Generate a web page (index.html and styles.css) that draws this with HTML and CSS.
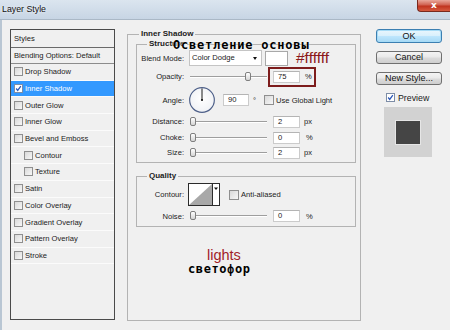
FILE: index.html
```html
<!DOCTYPE html>
<html>
<head>
<meta charset="utf-8">
<title>Layer Style</title>
<link rel="stylesheet" href="styles.css">
</head>
<body>
<div class="window">
  <div class="titlebar">
    <span class="title">Layer Style</span>
    <span class="close">x</span>
  </div>
  <div class="client">
    <div class="styles-panel">
      <div class="styles-head">Styles</div>
      <div class="blend-row">Blending Options: Default</div>
      <ul class="style-list">
        <li><span class="cb"></span>Drop Shadow</li>
        <li class="sel"><span class="cb on"><svg viewBox="0 0 9 9" width="7" height="7"><path d="M1.5 4.5 L3.5 7 L7.5 1.5" fill="none" stroke="#2a56b8" stroke-width="1.6"/></svg></span>Inner Shadow</li>
        <li><span class="cb"></span>Outer Glow</li>
        <li><span class="cb"></span>Inner Glow</li>
        <li><span class="cb"></span>Bevel and Emboss</li>
        <li class="sub"><span class="cb"></span>Contour</li>
        <li class="sub"><span class="cb"></span>Texture</li>
        <li><span class="cb"></span>Satin</li>
        <li><span class="cb"></span>Color Overlay</li>
        <li><span class="cb"></span>Gradient Overlay</li>
        <li><span class="cb"></span>Pattern Overlay</li>
        <li><span class="cb"></span>Stroke</li>
      </ul>
    </div>

    <fieldset class="group main">
      <legend>Inner Shadow</legend>
      <fieldset class="group inner">
        <legend>Structure</legend>
        <div class="row r16">
          <span class="lbl">Blend Mode:</span>
          <div class="select">Color Dodge<span class="arrow"></span></div>
          <span class="swatch"></span>
          <span class="hex">#ffffff</span>
        </div>
        <div class="row r21">
          <span class="lbl">Opacity:</span>
          <div class="slider"><span class="thumb" style="left:55px"></span></div>
          <div class="mark">
            <span class="num">75</span>
            <span class="unit pct">%</span>
          </div>
        </div>
        <div class="row r26">
          <span class="lbl">Angle:</span>
          <svg class="dial" viewBox="0 0 28 28" width="28" height="27">
            <defs>
              <radialGradient id="dg" cx="50%" cy="45%" r="60%">
                <stop offset="0" stop-color="#ffffff"/>
                <stop offset="1" stop-color="#eef0f4"/>
              </radialGradient>
            </defs>
            <circle cx="14" cy="13.5" r="12.8" fill="url(#dg)" stroke="#4d5f88" stroke-width="1.2"/>
            <line x1="14" y1="13.5" x2="14" y2="1.5" stroke="#111" stroke-width="1"/>
            <circle cx="14" cy="13.5" r="1.1" fill="#111"/>
          </svg>
          <span class="num angle">90</span>
          <span class="deg">°</span>
          <span class="cb gl"></span>
          <span class="cbtext">Use Global Light</span>
        </div>
        <div class="row r17">
          <span class="lbl">Distance:</span>
          <div class="slider"><span class="thumb" style="left:0px"></span></div>
          <span class="num">2</span>
          <span class="unit">px</span>
        </div>
        <div class="row r15">
          <span class="lbl">Choke:</span>
          <div class="slider"><span class="thumb" style="left:0px"></span></div>
          <span class="num">0</span>
          <span class="unit pct">%</span>
        </div>
        <div class="row r15">
          <span class="lbl">Size:</span>
          <div class="slider"><span class="thumb" style="left:0px"></span></div>
          <span class="num">2</span>
          <span class="unit">px</span>
        </div>
      </fieldset>

      <fieldset class="group inner quality">
        <legend>Quality</legend>
        <div class="row r23">
          <span class="lbl">Contour:</span>
          <svg class="contour" viewBox="0 0 32 23" width="32" height="23">
            <rect x="0.5" y="0.5" width="31" height="22" fill="#fff" stroke="#2b2b2b"/>
            <polygon points="1,22 24,1 24,22" fill="#a8a8a8"/>
            <line x1="24.5" y1="0.5" x2="24.5" y2="22.5" stroke="#2b2b2b"/>
            <polygon points="26,4.5 30,4.5 28,7" fill="#111"/>
          </svg>
          <span class="cb aa"></span>
          <span class="cbtext">Anti-aliased</span>
        </div>
        <div class="row r18">
          <span class="lbl">Noise:</span>
          <div class="slider"><span class="thumb" style="left:0px"></span></div>
          <span class="num">0</span>
          <span class="unit pct">%</span>
        </div>
      </fieldset>

      <div class="notes">
        <div class="note-en">lights</div>
        <div class="note-ru2">светофор</div>
      </div>
    </fieldset>

    <div class="side">
      <div class="btn ok">OK</div>
      <div class="btn">Cancel</div>
      <div class="btn">New Style...</div>
      <div class="preview-row">
        <span class="cb pv"><svg viewBox="0 0 9 9" width="7" height="7"><path d="M1.5 4.5 L3.5 7 L7.5 1.5" fill="none" stroke="#2a56b8" stroke-width="1.6"/></svg></span>
        <span class="pvtext">Preview</span>
      </div>
      <div class="preview-box"><span class="preview-inner"></span></div>
    </div>
  </div>
  <span class="note-ru">Осветление основы</span>
</div>
</body>
</html>
```

FILE: styles.css
```css
* { box-sizing: border-box; }

body {
  margin: 0;
  background: #f0f0f0;
  font-family: "Liberation Sans", Arial, sans-serif;
  font-size: 7.6px;
  color: #1b1b1b;
}

.window {
  position: relative;
  width: 450px;
  height: 330px;
  overflow: hidden;
  background: #f0f0f0;
}

/* title bar */
.titlebar {
  height: 20px;
  display: flex;
  justify-content: space-between;
  align-items: flex-start;
  background: linear-gradient(#dbe5ef, #c7d5e4);
  border-bottom: 1px solid #aab8c6;
}
.title {
  font-size: 8.8px;
  padding: 4px 0 0 2px;
  color: #111;
  text-shadow: 0 0 3px #fff;
}
.close {
  width: 33px;
  height: 12px;
  background: linear-gradient(#e9a89b, #d06150 45%, #c0341f 55%, #d55a3f);
  border: 1px solid #7a2a1e;
  border-top: 0;
  border-right: 0;
  border-radius: 0 0 0 4px;
  color: #fff;
  font: bold 9px "DejaVu Sans", sans-serif;
  line-height: 10px;
  text-align: center;
}

.client {
  display: flex;
  align-items: flex-start;
  height: 310px;
  padding: 9px 0 0 8px;
  border-left: 2px solid #b9c6d3;
}

/* styles list */
.styles-panel {
  flex: 0 0 105px;
  width: 105px;
  height: 291px;
  border: 1px solid #4a4a4a;
  background: #f0f0f0;
}
.styles-head {
  height: 18px;
  line-height: 17px;
  padding-left: 3px;
  border-bottom: 1px solid #6a6a6a;
}
.blend-row {
  height: 16px;
  line-height: 15px;
  padding-left: 3px;
  border-bottom: 1px solid #8c8c8c;
}
.style-list {
  list-style: none;
  margin: 0;
  padding: 0;
}
.style-list li {
  height: 16.7px;
  display: flex;
  align-items: center;
  gap: 2px;
  padding-left: 3px;
  border-bottom: 1px solid #fbfbfb;
}
.style-list li.sub { padding-left: 13px; }
.style-list li.sel {
  background: #3399ff;
  color: #fff;
}

.cb {
  flex: 0 0 9px;
  width: 9px;
  height: 9px;
  border: 1px solid #8f8f8f;
  background: linear-gradient(135deg, #d9d9d9, #f7f7f7);
  display: inline-flex;
  align-items: center;
  justify-content: center;
}
.cb.on, .cb.pv {
  background: #fff;
  border-color: #7d8da6;
}

/* group boxes */
.group {
  margin: 0;
  min-width: 0;
  border: 1px solid #b3b3b3;
}
.group legend {
  font-weight: bold;
  font-size: 8px;
  line-height: 10px;
  padding: 0 2px;
}
.main {
  flex: 0 0 234px;
  width: 234px;
  height: 292px;
  margin-left: 12px;
  padding: 0 4px 0 8px;
}
.main > legend { margin-left: 3px; }
.inner {
  width: 220px;
  padding: 1px 0 2px 0;
}
.inner > legend { margin-left: 10px; }
.quality {
  margin-top: 8px;
  padding: 2px 0 1px 0;
}

.row {
  display: flex;
  align-items: center;
}
.r15 { height: 15px; }
.r16 { height: 16px; }
.r17 { height: 17px; }
.r18 { height: 18px; margin-top: 1px; }
.r21 { height: 21px; }
.r23 { height: 23px; }
.r26 { height: 26px; }

.lbl {
  flex: 0 0 47px;
  width: 47px;
  text-align: right;
  margin-right: 4px;
}

.select {
  position: relative;
  width: 73px;
  height: 16px;
  margin-left: 1px;
  border: 1px solid #c4c4c4;
  background: #fff;
  line-height: 14px;
  padding-left: 2px;
}
.arrow {
  position: absolute;
  right: 4px;
  top: 6px;
  border-left: 2.5px solid transparent;
  border-right: 2.5px solid transparent;
  border-top: 3px solid #111;
}
.swatch {
  width: 23px;
  height: 15px;
  margin-left: 3px;
  background: #fff;
  border: 1px solid #a8a8a8;
}
.hex {
  margin-left: 8px;
  font-size: 15.5px;
  line-height: 14px;
  color: #8c1919;
}

.slider {
  position: relative;
  flex: 0 0 77px;
  width: 77px;
  height: 10px;
  margin-left: 2px;
}
.slider::before {
  content: "";
  position: absolute;
  left: 0;
  right: 0;
  top: 4px;
  height: 1px;
  background: #9e9e9e;
  box-shadow: 0 1px 0 #fff;
}
.thumb {
  position: absolute;
  top: 0;
  width: 6px;
  height: 9px;
  border: 1px solid #7f7f7f;
  border-radius: 2px;
  background: linear-gradient(#ffffff, #d4d4d4);
}

.num {
  width: 27px;
  height: 12px;
  margin-left: 6px;
  border: 1px solid #cbcbcb;
  border-top-color: #b4b4b4;
  background: #fff;
  line-height: 10px;
  padding-left: 4px;
}
.num.angle {
  width: 26px;
  margin-left: 7px;
}
.unit { margin-left: 4px; }
.unit.pct { margin-left: 6px; }
.deg { margin-left: 4px; }

.mark {
  display: flex;
  align-items: center;
  margin-left: 1px;
  border: 2px solid #7d1c1c;
  padding: 2px 2px 2px 3px;
}
.mark .num { margin-left: 0; }
.mark .unit.pct { margin-left: 5px; }

.cb.gl { margin-left: 8px; width: 10px; height: 10px; flex-basis: 10px; }
.cb.aa { margin-left: 9px; width: 10px; height: 10px; flex-basis: 10px; }
.cbtext { margin-left: 2px; }

.dial { display: block; }
.contour { display: block; }

.notes {
  margin-top: 21px;
  font-family: "Liberation Sans", Arial, sans-serif;
}
.note-en {
  padding-left: 71px;
  font-size: 14.5px;
  line-height: 15px;
  color: #a11d29;
}
.note-ru2 {
  padding-left: 52px;
  font: bold 12px "DejaVu Sans Mono", monospace;
  letter-spacing: 0.6px;
  line-height: 12px;
  color: #000;
}

/* overlay annotation */
.note-ru {
  position: absolute;
  left: 173px;
  top: 39px;
  font: bold 12px "DejaVu Sans Mono", monospace;
  letter-spacing: 0.8px;
  line-height: 12px;
  color: #000;
  text-shadow: 0 0 2px #fff;
}

/* right side */
.side {
  flex: 0 0 66px;
  width: 66px;
  margin-left: 15px;
  display: flex;
  flex-direction: column;
}
.btn {
  height: 13px;
  margin-top: 8px;
  border: 1px solid #707070;
  border-radius: 3px;
  background: linear-gradient(#f4f4f4, #e9e9e9 48%, #dcdcdc 52%, #cfcfcf);
  font-size: 9px;
  line-height: 11px;
  text-align: center;
  color: #111;
}
.btn.ok {
  height: 14px;
  margin-top: 0;
  border-color: #3c7fb1;
  box-shadow: inset 0 0 0 1px #a6dbf6;
  background: linear-gradient(#eaf6fd, #d9f0fc 48%, #bee6fd 52%, #a7d9f5);
  line-height: 12px;
}
.preview-row {
  display: flex;
  align-items: center;
  margin-top: 8px;
  padding-left: 10px;
  height: 9px;
}
.pvtext {
  margin-left: 3px;
  font-size: 8.8px;
}
.preview-box {
  width: 48px;
  height: 50px;
  margin: 5px 0 0 8px;
  background: #d2d2d2;
  display: flex;
  align-items: center;
  justify-content: center;
}
.preview-inner {
  width: 24px;
  height: 23px;
  background: #454545;
  box-shadow: 0 0 0 1px #e6e6e6;
}
```
